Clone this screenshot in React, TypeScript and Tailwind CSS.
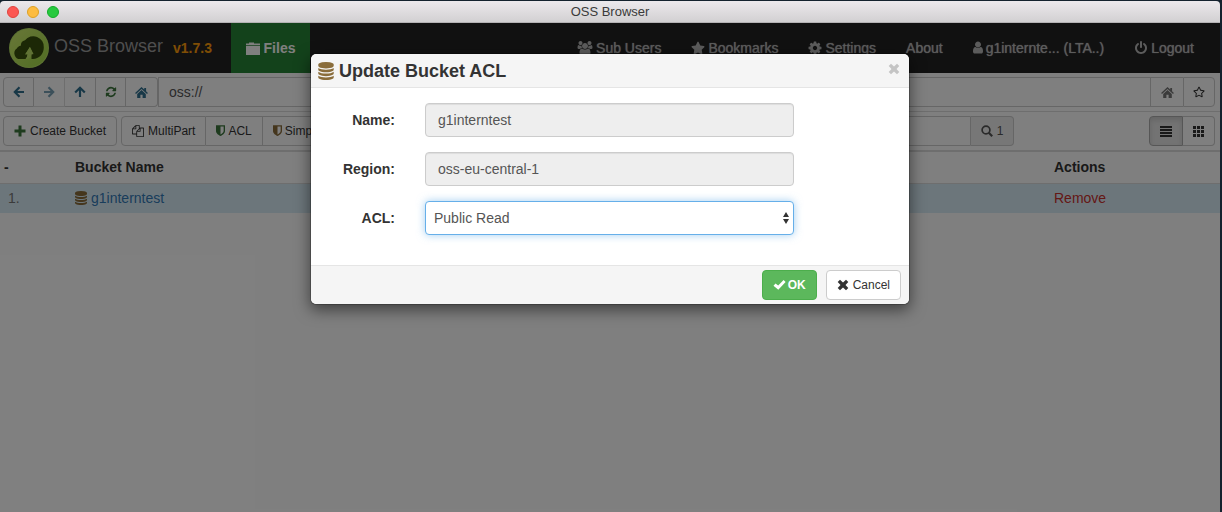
import React from 'react';
import { FaRegStar, FaStar } from 'react-icons/fa';

const iconPaths = {
  database:
    'M896 768q237 0 443-43t325-127v170q0 69-103 128t-280 93.5-385 34.5-385-34.5-280-93.5-103-128v-170q119 84 325 127t443 43zm0 768q237 0 443-43t325-127v170q0 69-103 128t-280 93.5-385 34.5-385-34.5-280-93.5-103-128v-170q119 84 325 127t443 43zm0-384q237 0 443-43t325-127v170q0 69-103 128t-280 93.5-385 34.5-385-34.5-280-93.5-103-128v-170q119 84 325 127t443 43zm0-1152q208 0 385 34.5t280 93.5 103 128v128q0 69-103 128t-280 93.5-385 34.5-385-34.5-280-93.5-103-128v-128q0-69 103-128t280-93.5 385-34.5z',
  refresh:
    'M1639 1056q0 5-1 7-64 268-268 434.5t-478 166.5q-146 0-282.5-55t-243.5-157l-129 129q-19 19-45 19t-45-19-19-45v-448q0-26 19-45t45-19h448q26 0 45 19t19 45-19 45l-137 137q71 66 161 102t187 36q134 0 250-65t186-179q11-17 53-117 8-23 30-23h192q13 0 22.5 9.5t9.5 22.5zm25-800v448q0 26-19 45t-45 19h-448q-26 0-45-19t-19-45 19-45l138-138q-148-137-349-137-134 0-250 65t-186 179q-11 17-53 117-8 23-30 23h-199q-13 0-22.5-9.5t-9.5-22.5v-7q65-268 270-434.5t480-166.5q146 0 284 55.5t245 156.5l130-129q19-19 45-19t45 19 19 45z',
  power:
    'M1664 896q0 156-61 298t-164 245-245 164-298 61-298-61-245-164-164-245-61-298q0-182 80.5-343t226.5-270q43-32 95.5-25t83.5 50q32 42 24.5 94.5t-49.5 84.5q-98 74-151.5 181t-53.5 228q0 104 40.5 198.5t109.5 163.5 163.5 109.5 198.5 40.5 198.5-40.5 163.5-109.5 109.5-163.5 40.5-198.5q0-121-53.5-228t-151.5-181q-42-32-49.5-84.5t24.5-94.5q31-43 84-50t95 25q146 109 226.5 270t80.5 343zm-640-768v640q0 52-38 90t-90 38-90-38-38-90v-640q0-52 38-90t90-38 90 38 38 90z',
  shield:
    'M1344 960v-640h-448v1137q119-63 213-137 235-184 235-360zm192-768v768q0 86-33.5 170.5t-83 150-118 127.5-126.5 103-121 77.5-89.5 49.5-42.5 20q-12 6-26 6t-26-6q-16-7-42.5-20t-89.5-49.5-121-77.5-126.5-103-118-127.5-83-150-33.5-170.5v-768q0-26 19-45t45-19h1152q26 0 45 19t19 45z',
  files:
    'M1696 384q40 0 68 28t28 68v1216q0 40-28 68t-68 28h-960q-40 0-68-28t-28-68v-288h-544q-40 0-68-28t-28-68v-672q0-40 20-88t48-76l408-408q28-28 76-48t88-20h416q40 0 68 28t28 68v328q68-40 128-40h416zm-544 213l-299 299h299v-299zm-640-384l-299 299h299v-299zm196 647l316-316v-416h-384v416q0 40-28 68t-68 28h-416v640h512v-256q0-40 20-88t48-76zm956 804v-1152h-384v416q0 40-28 68t-68 28h-416v640h896z',
  user:
    'M1536 1399q0 109-62.5 187t-150.5 78h-854q-88 0-150.5-78t-62.5-187q0-85 8.5-160.5t31.5-152 58.5-131 94-89 134.5-34.5q131 128 313 128t313-128q76 0 134.5 34.5t94 89 58.5 131 31.5 152 8.5 160.5zm-256-887q0 159-112.5 271.5t-271.5 112.5-271.5-112.5-112.5-271.5 112.5-271.5 271.5-112.5 271.5 112.5 112.5 271.5z',
  users:
    'M657 896q-162 5-265 128h-134q-82 0-138-40.5t-56-118.5q0-353 124-353 6 0 43.5 21t97.5 42.5 119 21.5q67 0 133-23-5 37-5 66 0 139 81 256zm1071 637q0 120-73 189.5t-194 69.5h-874q-121 0-194-69.5t-73-189.5q0-53 3.5-103.5t14-109 26.5-108.5 43-97.5 62-81 85.5-53.5 111.5-20q10 0 43 21.5t73 48 107 48 135 21.5 135-21.5 107-48 73-48 43-21.5q61 0 111.5 20t85.5 53.5 62 81 43 97.5 26.5 108.5 14 109 3.5 103.5zm-1024-1277q0 106-75 181t-181 75-181-75-75-181 75-181 181-75 181 75 75 181zm704 384q0 159-112.5 271.5t-271.5 112.5-271.5-112.5-112.5-271.5 112.5-271.5 271.5-112.5 271.5 112.5 112.5 271.5zm576 225q0 78-56 118.5t-138 40.5h-134q-103-123-265-128 81-117 81-256 0-29-5-66 66 23 133 23 59 0 119-21.5t97.5-42.5 43.5-21q124 0 124 353zm-128-609q0 106-75 181t-181 75-181-75-75-181 75-181 181-75 181 75 75 181z',
  cog:
    'M1152 896q0-106-75-181t-181-75-181 75-75 181 75 181 181 75 181-75 75-181zm512-109v222q0 12-8 23t-20 13l-185 28q-19 54-39 91 35 50 107 138 10 12 10 25t-9 23q-27 37-99 108t-94 71q-12 0-26-9l-138-108q-44 23-91 38-16 136-29 186-7 28-36 28h-222q-14 0-24.5-8.5t-11.5-21.5l-28-184q-49-16-90-37l-141 107q-10 9-25 9-14 0-25-11-126-114-165-168-7-10-7-23 0-12 8-23 15-21 51-66.5t54-70.5q-27-50-41-99l-183-27q-13-2-21-12.5t-8-23.5v-222q0-12 8-23t19-13l186-28q14-46 39-92-40-57-107-138-10-12-10-24 0-10 9-23 26-36 98.5-107.5t94.5-71.5q13 0 26 10l138 107q44-23 91-38 16-136 29-186 7-28 36-28h222q14 0 24.5 8.5t11.5 21.5l28 184q49 16 90 37l142-107q9-9 24-9 13 0 25 10 129 119 165 170 7 8 7 22 0 12-8 23-15 21-51 66.5t-54 70.5q26 50 41 98l183 28q13 2 21 12.5t8 23.5z',
};

interface IconProps {
  name: keyof typeof iconPaths;
  className?: string;
  viewBox?: string;
}

const Icon: React.FC<IconProps> = ({ name, className = 'size-3.5', viewBox = '0 0 1792 1792' }) => (
  <svg viewBox={viewBox} fill="currentColor" className={`shrink-0 ${className}`} aria-hidden="true">
    <path d={iconPaths[name]} />
  </svg>
);

const ArrowIcon: React.FC<{ className?: string }> = ({ className = '' }) => (
  <svg viewBox="0 0 12 12" fill="none" stroke="currentColor" strokeWidth="2.200" className={`size-3 ${className}`} aria-hidden="true">
    <path d="M6.500 1.200 1.800 6l4.700 4.800M2 6h9" />
  </svg>
);

const HomeIcon = () => (
  <svg viewBox="0 0 14 12" fill="currentColor" className="h-[11px] w-[13px] shrink-0" aria-hidden="true">
    <path d="M7 0 0 6.600l1 1.100L7 2.200l6 5.500 1-1.100-2-1.900V1h-2v1.800z" />
    <path d="M7 3.400 2.300 7.700V12h3.500V8.500h2.400V12h3.500V7.700z" />
  </svg>
);

const FolderIcon = () => (
  <svg viewBox="0 0 14 13" fill="currentColor" className="h-[13px] w-3.5" aria-hidden="true">
    <path d="M0 3V1.500h3V.5h5v1h6V3zM0 3.700h14V13H0z" />
  </svg>
);

const SearchIcon = () => (
  <svg viewBox="0 0 12 12" fill="none" stroke="currentColor" strokeWidth="1.700" className="size-3" aria-hidden="true">
    <circle cx="5" cy="5" r="3.900" />
    <path d="m7.800 7.800 3.400 3.400" strokeWidth="2.200" />
  </svg>
);

const PlusIcon = () => (
  <svg viewBox="0 0 12 12" fill="currentColor" className="size-3 text-[#3c763d]" aria-hidden="true">
    <path d="M4.500.5h3v4h4v3h-4v4h-3v-4h-4v-3h4z" />
  </svg>
);

const CrossIcon: React.FC<{ className?: string }> = ({ className = '' }) => (
  <svg viewBox="0 0 12 12" fill="currentColor" className={`size-3 ${className}`} aria-hidden="true">
    <path d="M.7 3 3 .7l3 2.800L9 .7 11.300 3 8.500 6l2.800 3L9 11.300 6 8.500l-3 2.800L.7 9l2.800-3z" />
  </svg>
);

const CheckIcon = () => (
  <svg viewBox="0 0 13 12" fill="currentColor" className="h-3 w-[13px]" aria-hidden="true">
    <path d="M.5 6.800 2.500 4.600l2.700 2L10.600 1l2 1.900L5.300 10.800z" />
  </svg>
);

const Logo = () => (
  <svg viewBox="0 0 40 40" className="size-10" aria-hidden="true">
    <defs>
      <linearGradient id="logo-fill" x1="0" y1="0" x2="1" y2="1">
        <stop offset="0" stopColor="#d2ee70" />
        <stop offset="1" stopColor="#a2dc48" />
      </linearGradient>
    </defs>
    <circle cx="20" cy="20" r="20" fill="#b9e463" />
    <circle cx="20" cy="20" r="19" fill="url(#logo-fill)" />
    <path
      d="M11.500 31a5.800 5.800 0 0 1-3.700-10.500c.8-1.500 2-2.500 4-2.800A5.500 5.500 0 0 1 16 12.300 10.500 10.500 0 0 1 34.800 19.500C34.800 26 30 31 24 31h-1.500v-5h2L21 19l-5 7.500h2.500Q18 29.500 16.500 31z"
      fill="#38500c"
    />
    <path d="M20.800 19 16.500 26h2.300q-.3 3-2 5h1.700q3.500-1.500 4-4.800h1.800z" fill="#c0e56a" />
  </svg>
);

const navLinks = [
  { label: 'Sub Users', icon: <Icon name="users" className="h-3.5 w-4" viewBox="0 0 2048 1792" /> },
  { label: 'Bookmarks', icon: <FaStar className="size-3.5" /> },
  { label: 'Settings', icon: <Icon name="cog" viewBox="64 64 1664 1664" /> },
  { label: 'About', icon: null },
  { label: 'g1internte... (LTA..)', icon: <Icon name="user" className="h-3.5 w-2.5" viewBox="256 128 1280 1664" /> },
  { label: 'Logout', icon: <Icon name="power" /> },
];

const TitleBar = () => (
  <header className="relative flex h-[22px] shrink-0 items-center justify-center rounded-t border-b border-[#b4b2b4] bg-linear-to-b from-[#ece9ec] to-[#d2d0d2]">
    <div className="absolute left-[7px] flex gap-2">
      <span className="size-3 rounded-full border border-[#e0443e] bg-[#fc5753]" />
      <span className="size-3 rounded-full border border-[#dea123] bg-[#fdbc40]" />
      <span className="size-3 rounded-full border border-[#12ac28] bg-[#27c93f]" />
    </div>
    <h1 className="text-[13px] text-[#3a3a3a]">OSS Browser</h1>
  </header>
);

const Navbar = () => (
  <nav className="flex h-[50px] shrink-0 items-stretch bg-[#222]">
    <div className="flex w-[231px] items-center pl-[9px]">
      <Logo />
      <span className="ml-[5px] pb-1 text-lg text-[#9d9d9d]">OSS Browser</span>
      <span className="ml-2.5 text-sm font-bold text-[#ff9c0a]">v1.7.3</span>
    </div>
    <a href="#" className="flex w-[79px] items-center justify-center gap-1 bg-[#278536] text-sm font-bold text-white">
      <FolderIcon /> Files
    </a>
    <div className="ml-auto flex pr-[11px] text-sm text-[#b8b8b8] [text-shadow:0_0_1px_#b8b8b8]">
      {navLinks.map((link) => (
        <a key={link.label} href="#" className="flex items-center gap-[3px] px-[15px]">
          {link.icon}
          {link.label}
        </a>
      ))}
    </div>
  </nav>
);

const AddressBar = () => (
  <div className="flex border-b border-[#ddd] px-[3px] pt-1 pb-1">
    <div className="flex h-[30px] text-[#31708f]">
      <button aria-label="Back" className="flex w-[31px] items-center justify-center rounded-l border border-[#ccc]">
        <ArrowIcon />
      </button>
      <button aria-label="Forward" disabled className="flex w-[31px] items-center justify-center border-y border-r border-[#ccc] opacity-65">
        <ArrowIcon className="rotate-180" />
      </button>
      <button aria-label="Up" className="flex w-[31px] items-center justify-center border-y border-r border-[#ccc]">
        <ArrowIcon className="rotate-90" />
      </button>
      <button aria-label="Refresh" className="flex w-[30px] items-center justify-center border-y border-r border-[#ccc] text-[#3c763d]">
        <Icon name="refresh" className="size-3" />
      </button>
      <button aria-label="Home" className="flex w-8 items-center justify-center rounded-r border-y border-r border-[#ccc]">
        <HomeIcon />
      </button>
    </div>
    <input
      aria-label="Address"
      defaultValue="oss://"
      className="h-[30px] min-w-0 flex-1 border border-[#ccc] px-2.5 text-sm text-[#555]"
    />
    <div className="mr-[2px] flex h-[30px]">
      <button aria-label="Set as home" className="flex w-8 items-center justify-center border-y border-[#ccc] text-[#777]">
        <HomeIcon />
      </button>
      <button aria-label="Add bookmark" className="flex w-8 items-center justify-center rounded-r border border-[#ccc] text-[#333]">
        <FaRegStar className="size-3" />
      </button>
    </div>
  </div>
);

const ListIcon = () => (
  <svg viewBox="0 0 12 11" fill="currentColor" className="h-[11px] w-3" aria-hidden="true">
    <path d="M0 0h12v2H0zM0 3h12v2H0zM0 6h12v2H0zM0 9h12v2H0z" />
  </svg>
);

const GridIcon = () => (
  <svg viewBox="0 0 11 11" fill="currentColor" className="size-[11px]" aria-hidden="true">
    <path d="M0 0h3v3H0zM4 0h3v3H4zM8 0h3v3H8zM0 4h3v3H0zM4 4h3v3H4zM8 4h3v3H8zM0 8h3v3H0zM4 8h3v3H4zM8 8h3v3H8z" />
  </svg>
);

const Toolbar = () => (
  <div className="flex border-b-2 border-[#ddd] px-[3px] py-1 text-xs text-[#333]">
    <button className="flex h-[30px] items-center gap-1 rounded border border-[#ccc] px-2.5 whitespace-nowrap">
      <PlusIcon /> Create Bucket
    </button>
    <div className="ml-1 flex h-[30px]">
      <button className="flex items-center gap-1 rounded-l border border-[#ccc] px-2.5">
        <Icon name="files" className="size-3" /> MultiPart
      </button>
      <button className="flex items-center gap-[3px] border-y border-r border-[#ccc] px-2.5">
        <Icon name="shield" className="h-3 w-[9px] text-[#3c763d]" viewBox="256 128 1280 1664" /> ACL
      </button>
      <button className="flex items-center gap-[3px] rounded-r border-y border-r border-[#ccc] px-2.5 whitespace-nowrap">
        <Icon name="shield" className="h-3 w-[9px] text-[#8a6d3b]" viewBox="256 128 1280 1664" /> Simple Policy
      </button>
    </div>
    <div className="ml-auto flex h-[30px] w-[220px]">
      <input aria-label="Search" className="min-w-0 flex-1 rounded-l border border-[#ccc] px-2" />
      <button className="flex w-[43px] items-center justify-center gap-1 rounded-r border-y border-r border-[#ccc] bg-[#eee] text-[#555]">
        <SearchIcon /> 1
      </button>
    </div>
    <div className="mr-[2px] ml-[135px] flex h-[30px]">
      <button
        aria-label="List view"
        className="flex w-[34px] items-center justify-center rounded-l border border-[#adadad] bg-[#e6e6e6] inset-shadow-[0_3px_5px_#00000020]"
      >
        <ListIcon />
      </button>
      <button aria-label="Grid view" className="flex w-8 items-center justify-center rounded-r border-y border-r border-[#ccc]">
        <GridIcon />
      </button>
    </div>
  </div>
);

const BucketTable = () => (
  <table className="w-full table-fixed text-left text-sm">
    <thead>
      <tr className="h-[31px] border-b border-[#ddd] text-[#333]">
        <th className="w-[75px] pl-1">-</th>
        <th>Bucket Name</th>
        <th className="w-[166px]">Actions</th>
      </tr>
    </thead>
    <tbody>
      <tr className="h-[30px] bg-[#d9edf7]">
        <td className="pl-2 text-[#777]">1.</td>
        <td>
          <a href="#" className="flex items-center gap-1 text-[#337ab7]">
            <Icon name="database" className="h-3.5 w-3 text-[#8a6d3b]" viewBox="128 0 1536 1792" /> g1interntest
          </a>
        </td>
        <td>
          <a href="#" className="text-[#c9302c]">Remove</a>
        </td>
      </tr>
    </tbody>
  </table>
);

const fieldClass = 'h-[34px] w-[369px] rounded border text-sm text-[#555]';

const AclDialog = () => {
  const [acl, setAcl] = React.useState('public-read');

  return (
    <div
      role="dialog"
      aria-labelledby="acl-title"
      className="w-[600px] self-start rounded-md border border-black/20 bg-white bg-clip-padding text-[#333] shadow-[0_5px_15px_rgba(0,0,0,0.5)]"
    >
      <div className="flex h-[34px] items-center rounded-t-md border-b border-[#e5e5e5] bg-[#f5f5f5] px-[7px]">
        <Icon name="database" className="h-[18px] w-4 text-[#8a6d3b]" viewBox="128 0 1536 1792" />
        <h2 id="acl-title" className="ml-[5px] text-lg font-bold">Update Bucket ACL</h2>
        <button aria-label="Close" className="mr-[2px] mb-1 ml-auto text-[#c4c4c4]">
          <CrossIcon />
        </button>
      </div>
      <form className="grid grid-cols-[84px_1fr] items-center gap-x-[30px] gap-y-[15px] pt-[15px] pb-[30px]">
        <label htmlFor="name" className="text-right text-sm font-bold">Name:</label>
        <input id="name" readOnly value="g1interntest" className={`${fieldClass} border-[#ccc] bg-[#eee] px-3 inset-shadow-[0_1px_1px_#00000013]`} />
        <label htmlFor="region" className="text-right text-sm font-bold">Region:</label>
        <input id="region" readOnly value="oss-eu-central-1" className={`${fieldClass} border-[#ccc] bg-[#eee] px-3 inset-shadow-[0_1px_1px_#00000013]`} />
        <label htmlFor="acl" className="text-right text-sm font-bold">ACL:</label>
        <div className="relative w-[369px]">
          <select
            id="acl"
            value={acl}
            onChange={(e) => setAcl(e.target.value)}
            className={`${fieldClass} block appearance-none border-[#66afe9] bg-white px-2 shadow-[0_0_8px_rgba(102,175,233,0.6)] outline-none`}
          >
            <option value="private">Private</option>
            <option value="public-read">Public Read</option>
            <option value="public-read-write">Public Read Write</option>
          </select>
          <svg viewBox="0 0 6 12" fill="currentColor" className="pointer-events-none absolute top-[11px] right-[5px] h-3 w-1.5" aria-hidden="true">
            <path d="M3 0 6 5H0zM3 12 0 7h6z" />
          </svg>
        </div>
      </form>
      <div className="flex justify-end gap-[9px] rounded-b-md border-t border-[#e5e5e5] bg-[#f5f5f5] px-2 py-1 text-xs">
        <button className="flex h-[30px] items-center gap-[2px] rounded-sm border border-[#4cae4c] bg-[#5cb85c] px-2.5 font-bold text-white">
          <CheckIcon /> OK
        </button>
        <button className="flex h-[30px] items-center gap-1 rounded-sm border border-[#ccc] bg-white px-2.5">
          <CrossIcon /> Cancel
        </button>
      </div>
    </div>
  );
};

const App = () => (
  <div className="h-screen bg-[#14222e] pt-px pr-[2px] font-['Liberation_Sans',Arial,sans-serif]">
    <div className="flex h-full flex-col">
      <TitleBar />
      <div className="relative flex flex-1 flex-col overflow-hidden bg-white">
        <Navbar />
        <AddressBar />
        <Toolbar />
        <BucketTable />
        {/* Modal backdrop */}
        <div className="absolute inset-0 flex justify-center bg-black/50 pt-[30px]">
          <AclDialog />
        </div>
      </div>
    </div>
  </div>
);

export default App;
